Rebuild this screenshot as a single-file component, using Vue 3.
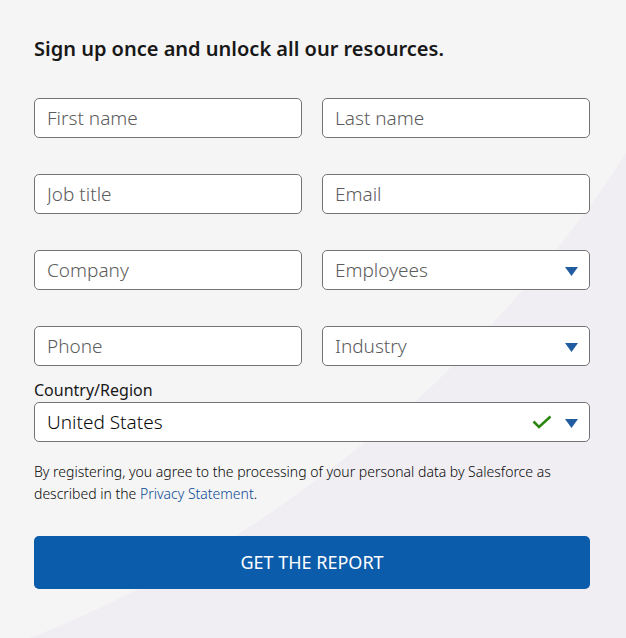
<script setup>
import { ref } from 'vue'

const fields = [
  { id: 'first', label: 'First name', type: 'text' },
  { id: 'last', label: 'Last name', type: 'text' },
  { id: 'title', label: 'Job title', type: 'text' },
  { id: 'email', label: 'Email', type: 'email' },
  { id: 'company', label: 'Company', type: 'text' },
  { id: 'employees', label: 'Employees', type: 'select' },
  { id: 'phone', label: 'Phone', type: 'tel' },
  { id: 'industry', label: 'Industry', type: 'select' },
]
const values = ref(Object.fromEntries(fields.map((f) => [f.id, ''])))
const country = ref('United States')
</script>

<template>
  <main class="page">
    <svg class="backdrop" viewBox="0 0 626 638" preserveAspectRatio="none" aria-hidden="true">
      <path d="M626 153C612 175 599 195 557 249C546 263 535 277 523 290C513 301 503 312 493 323C468 350 442 377 415 402C399 416 382 429 365 442C324 475 280 508 235 536C203 556 170 574 137 590C102 607 66 624 30 638H626Z" />
    </svg>
    <form class="form" @submit.prevent>
      <h1 class="heading">Sign up once and unlock all our resources.</h1>
      <div class="grid">
        <div v-for="f in fields" :key="f.id" class="control">
          <template v-if="f.type === 'select'">
            <select :id="f.id" v-model="values[f.id]" class="field empty" :aria-label="f.label">
              <option value="">{{ f.label }}</option>
            </select>
            <svg class="arrow" viewBox="0 0 13 9" aria-hidden="true"><path d="M0 0H13L6.5 9Z" /></svg>
          </template>
          <input v-else :id="f.id" v-model="values[f.id]" class="field" :type="f.type" :placeholder="f.label" :aria-label="f.label" />
        </div>
      </div>
      <label class="country-label" for="country">Country/Region</label>
      <div class="control">
        <select id="country" v-model="country" class="field">
          <option>United States</option>
        </select>
        <svg class="check" viewBox="0 0 20 14" aria-hidden="true"><path d="M1.5 6.5L7 12L18.5 1.5" /></svg>
        <svg class="arrow" viewBox="0 0 13 9" aria-hidden="true"><path d="M0 0H13L6.5 9Z" /></svg>
      </div>
      <p class="terms">
        By registering, you agree to the processing of your personal data by Salesforce as described in the
        <a href="#privacy">Privacy Statement</a>.
      </p>
      <button class="submit" type="submit">GET THE REPORT</button>
    </form>
  </main>
</template>

<style>
body {
  background: #f5f5f5;
}
</style>

<style scoped>
.page {
  position: relative;
  min-height: 100vh;
  box-sizing: border-box;
  padding: 34px 36px 48px 34px;
  color: #181818;
  font-family: "Noto Sans", "Open Sans", sans-serif;
}
.backdrop {
  position: absolute;
  inset: 0;
  width: 100%;
  height: 100%;
  fill: #f0eef3;
}
.form {
  position: relative;
}
.heading {
  margin: 0 0 34px;
  font-size: 20px;
  font-weight: 600;
  line-height: 30px;
}
.grid {
  display: grid;
  grid-template-columns: 1fr 1fr;
  gap: 36px 20px;
}
.control {
  position: relative;
}
.field {
  display: block;
  width: 100%;
  height: 40px;
  box-sizing: border-box;
  margin: 0;
  padding: 0 12px;
  appearance: none;
  border: 1px solid #747474;
  border-radius: 5px;
  background: #fff;
  color: #080808;
  font: 300 19px "Noto Sans", "Open Sans", sans-serif;
}
.field::placeholder,
.empty {
  color: #5c5c5c;
  opacity: 1;
}
.arrow {
  position: absolute;
  top: 17px;
  right: 12px;
  width: 13px;
  height: 9px;
  fill: #215ca0;
  pointer-events: none;
}
.check {
  position: absolute;
  top: 13px;
  right: 38px;
  width: 20px;
  height: 14px;
  fill: none;
  stroke: #2b8610;
  stroke-width: 2.5;
  pointer-events: none;
}
.country-label {
  display: block;
  margin-top: 13px;
  padding-bottom: 1px;
  font-size: 16px;
  line-height: 22px;
}
.terms {
  margin: 19px 0 31px;
  color: #080808;
  font-size: 14px;
  font-weight: 300;
  line-height: 22px;
}
.terms a {
  color: #0b4a94;
  text-decoration: none;
}
.submit {
  width: 100%;
  height: 53px;
  padding: 0 0 2px;
  border: 0;
  border-radius: 5px;
  background: #0b5cab;
  color: #fff;
  font: 18px "Noto Sans", "Open Sans", sans-serif;
}
</style>
